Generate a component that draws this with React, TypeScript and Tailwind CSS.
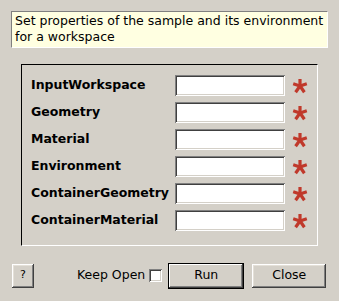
import React from "react";

const raised =
  "shadow-[inset_-1px_-1px_#404040,inset_1px_1px_#ffffff,inset_-2px_-2px_#808080,inset_2px_2px_#e4e0d8]";
const sunken =
  "shadow-[inset_1px_1px_#808080,inset_-1px_-1px_#ffffff,inset_2px_2px_#404040,inset_-2px_-2px_#d4d0c8]";

const fields = [
  "InputWorkspace",
  "Geometry",
  "Material",
  "Environment",
  "ContainerGeometry",
  "ContainerMaterial",
];

function Star() {
  return (
    <svg width="16" height="16" viewBox="0 0 16 16" className="shrink-0">
      <g stroke="#c0392b" strokeWidth="3.2" strokeLinecap="butt">
        <line x1="8" y1="1" x2="8" y2="8.5" />
        <line x1="8" y1="8" x2="1.2" y2="5.8" />
        <line x1="8" y1="8" x2="14.8" y2="5.8" />
        <line x1="8" y1="8" x2="3.6" y2="14.2" />
        <line x1="8" y1="8" x2="12.4" y2="14.2" />
      </g>
    </svg>
  );
}

export default function App() {
  return (
    <div
      className="w-[339px] h-[301px] bg-[#d4d0c8] flex flex-col text-black"
      style={{ fontFamily: '"DejaVu Sans", sans-serif' }}
    >
      <div className="mt-[11px] ml-[11px] w-[317px] h-[37px] bg-[#ffffe1] border-t border-l border-[#808080] border-b border-r border-b-white border-r-white px-[3px] pt-[1px] text-[12.5px] leading-[16px]">
        Set properties of the sample and its environment for a workspace
      </div>
      <div className="mt-[16px] ml-[21px] w-[297px] h-[182px] border-t border-l border-black border-b border-r border-b-white border-r-white pt-[10px] pl-[9px] flex flex-col gap-[6px]">
        {fields.map((f) => (
          <div key={f} className="flex items-center h-[21px]">
            <div className="w-[144px] text-[12.5px] font-bold leading-none">{f}</div>
            <div className={`w-[110px] h-[21px] bg-white ${sunken}`} />
            <div className="ml-[7px] mt-[1px]">
              <Star />
            </div>
          </div>
        ))}
      </div>
      <div className="mt-[17px] flex items-center h-[25px] text-[12.5px]">
        <button
          className={`ml-[12px] w-[22px] h-[24px] bg-[#d4d0c8] text-[11px] flex items-center justify-center ${raised}`}
        >
          ?
        </button>
        <span className="ml-[43px]">Keep Open</span>
        <span className={`ml-[4px] w-[13px] h-[13px] bg-white ${sunken}`} />
        <button
          className={`ml-[6px] w-[76px] h-[26px] bg-[#d4d0c8] border border-black flex items-center justify-center shadow-[inset_-1px_-1px_#404040,inset_1px_1px_#ffffff,inset_-2px_-2px_#808080]`}
        >
          Run
        </button>
        <button
          className={`ml-[8px] w-[74px] h-[24px] bg-[#d4d0c8] flex items-center justify-center ${raised}`}
        >
          Close
        </button>
      </div>
    </div>
  );
}
